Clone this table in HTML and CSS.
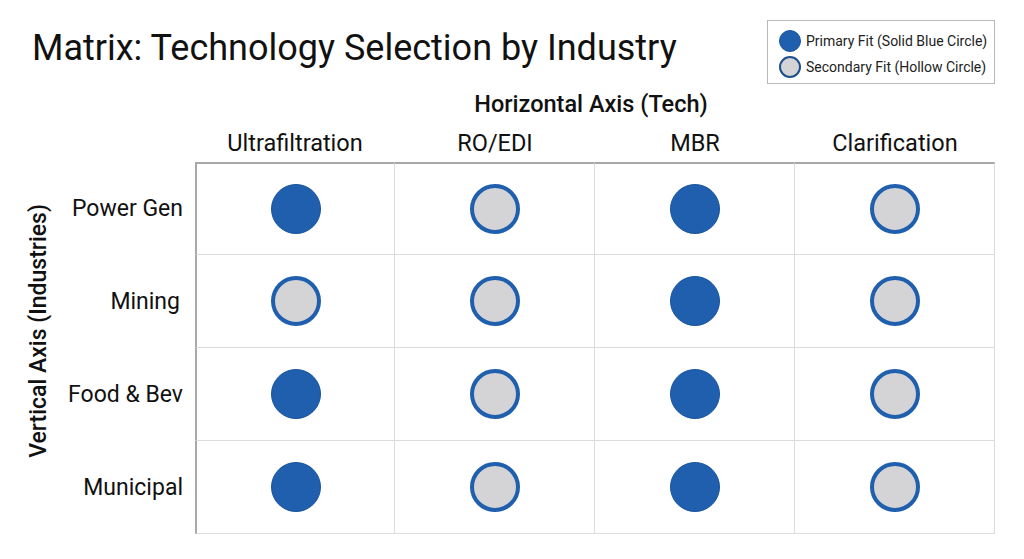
FILE: index.html
```html
<!DOCTYPE html>
<html>
<head>
<meta charset="utf-8">
<link rel="stylesheet" href="styles.css">
</head>
<body>
<div class="page">
  <header class="header">
    <h1 class="title">Matrix: Technology Selection by Industry</h1>
    <div class="legend">
      <div class="legend-item"><span class="dot dot-solid dot-sm"></span>Primary Fit (Solid Blue Circle)</div>
      <div class="legend-item"><span class="dot dot-hollow dot-sm"></span>Secondary Fit (Hollow Circle)</div>
    </div>
  </header>
  <section class="matrix">
    <div class="h-axis">Horizontal Axis (Tech)</div>
    <div class="col-head c1">Ultrafiltration</div>
    <div class="col-head c2">RO/EDI</div>
    <div class="col-head c3">MBR</div>
    <div class="col-head c4">Clarification</div>
    <div class="v-axis"><span>Vertical Axis (Industries)</span></div>

    <div class="row-label r1">Power Gen</div>
    <div class="cell r1 c1 top left"><span class="dot dot-solid"></span></div>
    <div class="cell r1 c2 top"><span class="dot dot-hollow"></span></div>
    <div class="cell r1 c3 top"><span class="dot dot-solid"></span></div>
    <div class="cell r1 c4 top right"><span class="dot dot-hollow"></span></div>

    <div class="row-label r2 nudge">Mining</div>
    <div class="cell r2 c1 left"><span class="dot dot-hollow"></span></div>
    <div class="cell r2 c2"><span class="dot dot-hollow"></span></div>
    <div class="cell r2 c3"><span class="dot dot-solid"></span></div>
    <div class="cell r2 c4 right"><span class="dot dot-hollow"></span></div>

    <div class="row-label r3">Food &amp; Bev</div>
    <div class="cell r3 c1 left"><span class="dot dot-solid"></span></div>
    <div class="cell r3 c2"><span class="dot dot-hollow"></span></div>
    <div class="cell r3 c3"><span class="dot dot-solid"></span></div>
    <div class="cell r3 c4 right"><span class="dot dot-hollow"></span></div>

    <div class="row-label r4">Municipal</div>
    <div class="cell r4 c1 left bottom"><span class="dot dot-solid"></span></div>
    <div class="cell r4 c2 bottom"><span class="dot dot-hollow"></span></div>
    <div class="cell r4 c3 bottom"><span class="dot dot-solid"></span></div>
    <div class="cell r4 c4 right bottom"><span class="dot dot-hollow"></span></div>
  </section>
</div>
</body>
</html>
```

FILE: styles.css
```css
* { box-sizing: border-box; }
html, body { margin: 0; padding: 0; background: #ffffff; }
body {
  font-family: Roboto, "Liberation Sans", Arial, sans-serif;
  color: #111111;
  width: 1024px;
  height: 559px;
  overflow: hidden;
}
.page { padding: 20px 29px 0 0; }
.header {
  display: flex;
  justify-content: space-between;
  align-items: flex-start;
  height: 63px;
}
.title {
  margin: 7px 0 0 32px;
  font-size: 36px;
  line-height: 42px;
  font-weight: 400;
  color: #111;
}
.legend {
  width: 228px;
  height: 64px;
  border: 1px solid #b8b8b8;
  padding: 9px 0 0 11px;
  display: flex;
  flex-direction: column;
  gap: 4px;
}
.legend-item {
  display: flex;
  align-items: center;
  gap: 5px;
  font-size: 14px;
  line-height: 22px;
  color: #222;
}
.matrix {
  display: grid;
  grid-template-columns: 62px 133px repeat(4, 200px);
  grid-template-rows: 42px 37px repeat(4, 93px);
}
.h-axis {
  grid-column: 3 / 7;
  grid-row: 1;
  text-align: center;
  font-size: 23.5px;
  font-weight: 500;
  line-height: 42px;
  padding-right: 8px;
}
.col-head {
  grid-row: 2;
  text-align: center;
  font-size: 23.5px;
  line-height: 37px;
}
.c1 { grid-column: 3; }
.c2 { grid-column: 4; }
.c3 { grid-column: 5; }
.c4 { grid-column: 6; }
.r1 { grid-row: 3; }
.r2 { grid-row: 4; }
.r3 { grid-row: 5; }
.r4 { grid-row: 6; }
.v-axis {
  grid-column: 1;
  grid-row: 3 / 7;
  display: flex;
  align-items: center;
  justify-content: center;
  padding-bottom: 34px;
  padding-left: 14px;
}
.v-axis span {
  writing-mode: vertical-rl;
  transform: rotate(180deg);
  font-size: 23px;
  font-weight: 500;
}
.row-label {
  grid-column: 2;
  display: flex;
  align-items: center;
  justify-content: flex-end;
  padding-right: 12px;
  font-size: 23px;
}
.row-label.nudge { padding-right: 15px; }
.cell {
  display: flex;
  align-items: center;
  justify-content: center;
  border-right: 1px solid #dcdcdc;
  border-bottom: 1px solid #dcdcdc;
}
.cell.top { border-top: 2px solid #a8a8a8; }
.cell.left { border-left: 2px solid #a8a8a8; }
.dot {
  display: block;
  width: 50px;
  height: 50px;
  border-radius: 50%;
  flex: none;
}
.dot-solid { background: #1f5fad; border: 1px solid #1a559e; }
.dot-hollow { background: #d4d4d6; border: 4px solid #1f5fad; }
.dot-sm { width: 22px; height: 22px; }
.dot-sm.dot-hollow { border-width: 2px; border-color: #1e4f8c; }
```
